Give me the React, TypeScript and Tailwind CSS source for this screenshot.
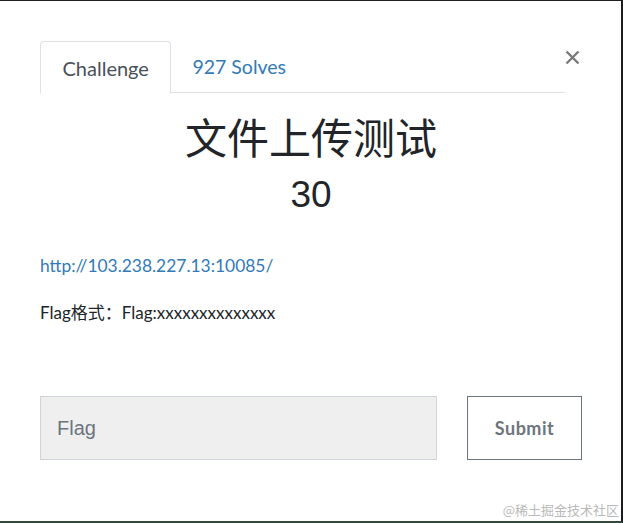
import React from "react";

export default function App() {
  return (
    <div className="relative w-[623px] h-[523px] overflow-hidden bg-white border-t border-t-[#1e1e22] border-r-2 border-r-[#1c1c1f] border-b-2 border-b-[#34493a]">
      <div className="pl-[40px] pr-[39px] pt-[40px]">
        <div className="flex items-start">
          <div className="flex w-[525px] h-[52px] border-b border-[#dee2e6]">
            <div className="flex items-center h-[53px] px-[21.5px] border border-[#dee2e6] border-b-white rounded-t-[4px] bg-white text-[20px] text-[#495057] font-['Lato',sans-serif]">
              Challenge
            </div>
            <div className="flex items-center h-[52px] px-[21px] text-[19.5px] text-[#337ab7] font-['Lato',sans-serif]">
              927 Solves
            </div>
          </div>
          <button className="-ml-[1px] mt-[8px] w-[16px] h-[16px] flex items-center justify-center">
            <svg width="15" height="15" viewBox="0 0 15 15">
              <path d="M1.5 1.5 L13.5 13.5 M13.5 1.5 L1.5 13.5" stroke="#7a7a7a" strokeWidth="2.4" />
            </svg>
          </button>
        </div>

        <h2 className="mt-[20px] text-center text-[42px] leading-[50px] text-[#212529] font-['Lato','Noto_Sans_CJK_SC',sans-serif]">
          文件上传测试
        </h2>
        <h4 className="mt-[10px] text-center text-[37px] leading-[44px] text-[#212529] font-['Liberation_Sans',sans-serif]">
          30
        </h4>

        <div className="mt-[37px] text-[17.4px] leading-[24px] font-['Lato','Noto_Sans_CJK_SC',sans-serif]">
          <a className="text-[#337ab7]">http://103.238.227.13:10085/</a>
        </div>
        <div className="mt-[23px] text-[17px] leading-[24px] text-[#212529] font-['Lato','Noto_Sans_CJK_SC',sans-serif]">
          Flag格式：Flag:xxxxxxxxxxxxxx
        </div>

        <div className="mt-[71px] flex gap-[30px]">
          <div className="w-[397px] h-[64px] bg-[#efefef] border border-[#ced4da] flex items-center px-[16px] text-[20px] text-[#6c757d] font-['Liberation_Sans',sans-serif]">
            Flag
          </div>
          <button className="w-[115px] h-[64px] border border-[#6c757d] bg-white text-[18px] font-bold text-[#6c757d] tracking-[0.5px] font-['Lato',sans-serif]">
            Submit
          </button>
        </div>
      </div>
      <div className="absolute right-[2px] bottom-[3px] text-[13px] leading-[16px] text-[#b9b9b9] font-['Noto_Sans_CJK_SC',sans-serif]">
        @稀土掘金技术社区
      </div>
    </div>
  );
}
